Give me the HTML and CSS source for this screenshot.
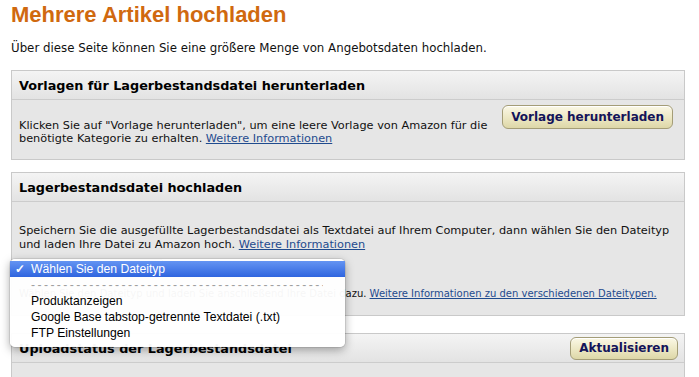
FILE: index.html
```html
<!DOCTYPE html>
<html lang="de">
<head>
<meta charset="utf-8">
<title>Mehrere Artikel hochladen</title>
<link rel="stylesheet" href="styles.css">
</head>
<body>
<div class="page">
  <h1 class="title">Mehrere Artikel hochladen</h1>
  <p class="intro">Über diese Seite können Sie eine größere Menge von Angebotsdaten hochladen.</p>

  <section class="box box-templates">
    <div class="box-head"><h2>Vorlagen für Lagerbestandsdatei herunterladen</h2></div>
    <div class="box-body row">
      <p class="text">Klicken Sie auf "Vorlage herunterladen", um eine leere Vorlage von Amazon für die<br>benötigte Kategorie zu erhalten. <a href="#">Weitere Informationen</a></p>
      <button class="btn">Vorlage herunterladen</button>
    </div>
  </section>

  <section class="box box-upload">
    <div class="box-head"><h2>Lagerbestandsdatei hochladen</h2></div>
    <div class="box-body">
      <p class="text wide">Speichern Sie die ausgefüllte Lagerbestandsdatei als Textdatei auf Ihrem Computer, dann wählen Sie den Dateityp<br>und laden Ihre Datei zu Amazon hoch. <a href="#">Weitere Informationen</a></p>
      <div class="select-row">
        <select class="filetype"><option>Wählen Sie den Dateityp</option></select>
      </div>
      <p class="text note">Wählen Sie den Dateityp und laden Sie anschließend Ihre Datei dazu. <a href="#">Weitere Informationen zu den verschiedenen Dateitypen.</a></p>
    </div>

    <ul class="menu">
      <li class="item selected"><span class="check">✓</span>Wählen Sie den Dateityp</li>
      <li class="item sep">--------------------------------------------------------------------------------</li>
      <li class="item">Produktanzeigen</li>
      <li class="item">Google Base tabstop-getrennte Textdatei (.txt)</li>
      <li class="item">FTP Einstellungen</li>
    </ul>
  </section>

  <section class="box box-status">
    <div class="box-head row-head"><h2>Uploadstatus der Lagerbestandsdatei</h2><button class="btn">Aktualisieren</button></div>
    <div class="box-body">
      <p class="text wide">Hier sehen Sie den Status Ihrer zehn letzten Lagerbestandsdatei-Hochladevorgänge. Wenn Ihr<br>Upload noch bearbeitet wird, klicken Sie auf "Aktualisieren".</p>
    </div>
  </section>
</div>
</body>
</html>
```

FILE: styles.css
```css
html, body {
  margin: 0;
  padding: 0;
  background: #ffffff;
  overflow: hidden;
}

.page {
  padding: 0 14px 0 11px;
  font-family: "DejaVu Sans", Verdana, sans-serif;
  font-size: 11.3px;
  color: #111;
}

.title {
  margin: 0;
  padding-top: 2px;
  font-family: "Liberation Sans", Arial, sans-serif;
  font-size: 22px;
  line-height: 26px;
  font-weight: bold;
  color: #d0690f;
}

.intro {
  margin: 13px 0 0 0;
  font-size: 11.8px;
  line-height: 14px;
}

.box {
  position: relative;
  border: 1px solid #c9c9c9;
  background: #e6e6e6;
}

.box-templates { margin-top: 15px; }
.box-upload { margin-top: 12px; }
.box-status { margin-top: 17px; }

.box-head {
  height: 28px;
  border-bottom: 1px solid #cccccc;
  background: linear-gradient(#f4f4f4, #e3e3e3);
  display: flex;
  align-items: center;
  padding: 0 7px;
}

.box-head h2 {
  margin: 0;
  font-size: 12.8px;
  font-weight: bold;
  color: #000;
}

.row-head {
  justify-content: space-between;
}

.box-body {
  padding: 5px 7px 0 7px;
}

.row {
  display: flex;
  align-items: flex-start;
  height: 54px;
}

.text {
  margin: 0;
  line-height: 13px;
}

.row .text {
  padding-top: 14px;
  white-space: nowrap;
}

.wide {
  padding-top: 17px;
  line-height: 14px;
  white-space: nowrap;
}

a {
  color: #1f4b8e;
  text-decoration: underline;
}

.btn {
  flex-shrink: 0;
  white-space: nowrap;
  margin-left: auto;
  margin-right: 4px;
  height: 24px;
  padding: 0 8px;
  border: 1px solid #a49d77;
  border-radius: 6px;
  background: linear-gradient(#fbf8e6, #ece7c3 55%, #ddd7a8);
  box-shadow: inset 0 1px 0 #ffffff;
  font-family: "DejaVu Sans", Verdana, sans-serif;
  font-size: 12px;
  font-weight: bold;
  color: #14145a;
}

.row-head .btn {
  margin-right: -1px;
  height: 23px;
  padding: 0 8px;
  font-size: 12px;
}

.select-row {
  height: 29px;
  display: flex;
  align-items: center;
}

.filetype {
  font-size: 11px;
}

.note {
  padding: 6px 0 14px 0;
  font-size: 10px;
  line-height: 14px;
  white-space: nowrap;
}

.menu {
  position: absolute;
  left: -2px;
  top: 86px;
  width: 335px;
  margin: 0;
  padding: 2px 0 6px 0;
  list-style: none;
  background: rgba(255, 255, 255, 0.96);
  border-radius: 5px;
  box-shadow: 0 3px 10px rgba(0, 0, 0, 0.35), 0 0 0 1px rgba(0, 0, 0, 0.08);
  font-family: "Liberation Sans", "Lucida Grande", sans-serif;
  font-size: 12.2px;
  color: #000;
  z-index: 2;
}

.item {
  height: 16px;
  line-height: 16px;
  padding-left: 21px;
  white-space: nowrap;
  overflow: hidden;
}

.selected {
  position: relative;
  background: linear-gradient(#6494f2, #2f65df);
  color: #fff;
}

.check {
  position: absolute;
  left: 5px;
  top: 0;
  font-weight: bold;
}

.sep {
  color: #a0a0a0;
  width: 292px;
  letter-spacing: 2.4px;
}
```
